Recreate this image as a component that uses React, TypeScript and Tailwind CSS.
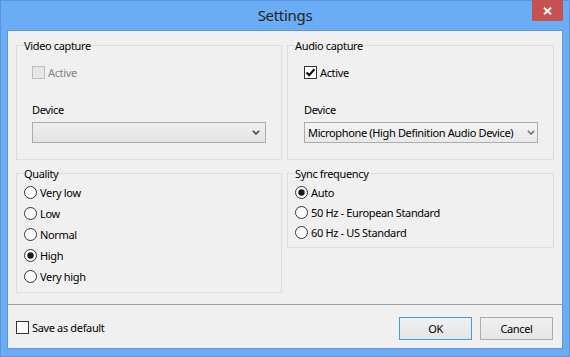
import React from "react";

function Check({ checked, disabled }: { checked?: boolean; disabled?: boolean }) {
  return (
    <svg width="13" height="13" viewBox="0 0 13 13" className="shrink-0">
      <rect
        x="0.5"
        y="0.5"
        width="12"
        height="12"
        fill={disabled ? "#e6e6e6" : "#ffffff"}
        stroke={disabled ? "#bcbcbc" : "#333333"}
      />
      {checked && (
        <path d="M2.6 6.4 L5.2 9.1 L10.4 3.2" fill="none" stroke="#111111" strokeWidth="2.1" />
      )}
    </svg>
  );
}

function Radio({ checked }: { checked?: boolean }) {
  return (
    <svg width="13" height="13" viewBox="0 0 13 13" className="shrink-0">
      <circle cx="6.5" cy="6.5" r="6" fill="#ffffff" stroke="#333333" />
      {checked && <circle cx="6.5" cy="6.5" r="3.2" fill="#1b1b1b" />}
    </svg>
  );
}

function Chevron({ color }: { color: string }) {
  return (
    <svg width="8" height="5" viewBox="0 0 8 5" className="shrink-0">
      <path d="M0.8 0.8 L4 4 L7.2 0.8" fill="none" stroke={color} strokeWidth="1.6" />
    </svg>
  );
}

function Group({
  label,
  className,
  children,
}: {
  label: string;
  className: string;
  children: React.ReactNode;
}) {
  return (
    <div className={"relative border border-[#dcdcdc] " + className}>
      <span className="absolute -top-[8px] left-[7px] bg-[#f0f0f0] leading-[15px] text-black">
        {label}
      </span>
      {children}
    </div>
  );
}

export default function App() {
  const quality = ["Very low", "Low", "Normal", "High", "Very high"];
  const sync = ["Auto", "50 Hz - European Standard", "60 Hz - US Standard"];
  return (
    <div className="relative w-[570px] h-[357px] bg-[#6aacf5] border border-[#5b95d8] flex flex-col font-['Noto_Sans',sans-serif] text-[11px] tracking-[-0.35px] text-black">
      <div className="h-[29px] flex items-center justify-center text-[15px] tracking-[-0.3px] text-[#222222]">
        Settings
      </div>
      <div className="absolute -top-[1px] right-[6px] w-[31px] h-[21px] bg-[#c75050] flex items-center justify-center">
        <svg width="9" height="8" viewBox="0 0 9 8">
          <path d="M1 0.8 L8 7.2 M8 0.8 L1 7.2" stroke="#ffffff" strokeWidth="1.9" />
        </svg>
      </div>
      <div className="mx-[6px] h-[319px] bg-[#f0f0f0] border border-[#5e97d9] flex flex-col">
        <div className="h-[273px] px-[8px] pt-[14px] flex gap-[5px]">
          <div className="w-[266px] flex flex-col gap-[13px]">
            <Group label="Video capture" className="h-[115px] pl-[15px] pt-[20px] flex flex-col">
              <div className="flex items-center h-[13px] gap-[3px]">
                <Check disabled />
                <span className="leading-[15px] text-[#838383]">Active</span>
              </div>
              <div className="mt-[23px] leading-[15px]">Device</div>
              <div className="mt-[5px] w-[234px] h-[21px] border border-[#acacac] bg-gradient-to-b from-[#efefef] to-[#e3e3e3] flex items-center justify-end pr-[5px]">
                <Chevron color="#444444" />
              </div>
            </Group>
            <Group label="Quality" className="h-[120px] pl-[7px] pt-[8px] flex flex-col">
              {quality.map((q) => (
                <div key={q} className="h-[21px] flex items-center gap-[3px]">
                  <Radio checked={q === "High"} />
                  <span className="leading-[15px]">{q}</span>
                </div>
              ))}
            </Group>
          </div>
          <div className="w-[267px] flex flex-col gap-[13px]">
            <Group label="Audio capture" className="h-[115px] pl-[16px] pt-[20px] flex flex-col">
              <div className="flex items-center h-[13px] gap-[3px]">
                <Check checked />
                <span className="leading-[15px]">Active</span>
              </div>
              <div className="mt-[23px] leading-[15px]">Device</div>
              <div className="mt-[5px] w-[234px] h-[21px] border border-[#acacac] bg-gradient-to-b from-[#f3f3f3] to-[#e9e9e9] flex items-center justify-between pl-[3px] pr-[2px]">
                <span className="leading-[15px] whitespace-nowrap">
                  Microphone (High Definition Audio Device)
                </span>
                <Chevron color="#707070" />
              </div>
            </Group>
            <Group label="Sync frequency" className="h-[75px] pl-[7px] pt-[8px] flex flex-col">
              {sync.map((s) => (
                <div key={s} className="h-[20px] flex items-center gap-[3px]">
                  <Radio checked={s === "Auto"} />
                  <span className="leading-[15px] whitespace-nowrap">{s}</span>
                </div>
              ))}
            </Group>
          </div>
        </div>
        <div className="h-px bg-[#a0a0a0]" />
        <div className="flex-1 flex items-start justify-between pl-[8px] pr-[9px] pt-[12px]">
          <div className="mt-[4px] h-[13px] flex items-center gap-[3px]">
            <Check />
            <span className="leading-[15px]">Save as default</span>
          </div>
          <div className="flex gap-[8px]">
            <div className="w-[73px] h-[23px] border border-[#3c9de8] bg-gradient-to-b from-[#f0f0f0] to-[#e5e5e5] flex items-center justify-center leading-[15px]">
              OK
            </div>
            <div className="w-[73px] h-[23px] border border-[#acacac] bg-gradient-to-b from-[#f0f0f0] to-[#e5e5e5] flex items-center justify-center leading-[15px]">
              Cancel
            </div>
          </div>
        </div>
      </div>
    </div>
  );
}
